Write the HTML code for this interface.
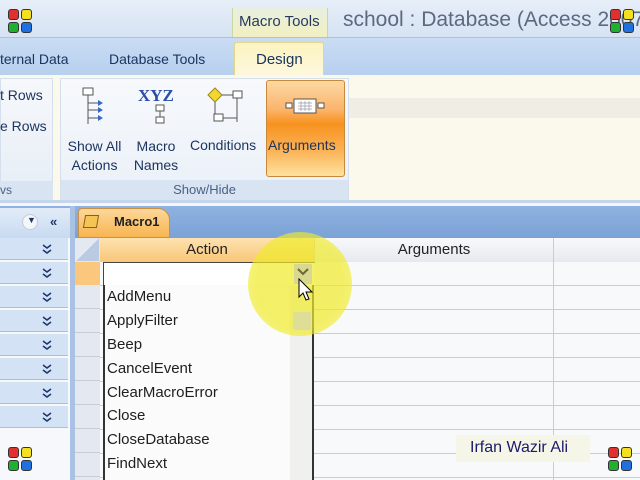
<!DOCTYPE html>
<html><head><style>
*{margin:0;padding:0;box-sizing:border-box}
body{width:640px;height:480px;overflow:hidden;position:relative;font-family:"Liberation Sans",sans-serif;background:#f4f6fa;color:#15284b}
.a{position:absolute}
.logo{position:absolute;width:24px;height:24px}
.logo i{position:absolute;width:11px;height:11px;border-radius:3px;border:1px solid #333}
.rows div{position:absolute;left:0;width:68px;height:22px;background:#d3e2f5;border-bottom:1px solid #a8c0e0}
.rows svg{position:absolute;left:42px;top:6px}
.li{position:absolute;left:107px;font-size:15px;color:#202020}
.hl{position:absolute;left:100px;width:540px;height:1px;background:#c8ccd4}
</style></head><body>
<div class="a" style="left:0;top:0;width:640px;height:38px;background:linear-gradient(#e6eef8,#d6e3f3)"></div>
<div class="a" style="left:232px;top:8px;width:96px;height:30px;background:linear-gradient(#e8efe0,#f1f0c0);border-left:1px solid #c9d6a8;border-right:1px solid #c9d6a8"></div>
<div class="a" style="left:239px;top:13px;font-size:15px;color:#253a5e">Macro Tools</div>
<div class="a" style="left:343px;top:8px;font-size:21px;color:#5b6a80;white-space:nowrap">school : Database (Access 2007)</div>
<div class="a" style="left:0;top:37px;width:640px;height:38px;background:linear-gradient(#c9dcf3,#b7d0ef);border-top:1px solid #a9c3e4"></div>
<div class="a" style="left:0;top:51px;font-size:14px;color:#1c3560;white-space:nowrap">ternal Data</div>
<div class="a" style="left:109px;top:51px;font-size:14px;color:#1c3560">Database Tools</div>
<div class="a" style="left:234px;top:42px;width:90px;height:34px;background:linear-gradient(#fbf3c0,#fdf8de);border:1px solid #e2d68c;border-bottom:none;border-radius:3px 3px 0 0"></div>
<div class="a" style="left:256px;top:51px;font-size:15px;color:#1c3560">Design</div>
<div class="a" style="left:0;top:75px;width:640px;height:128px;background:#fbf9ec;border-bottom:3px solid #c6d6ea"></div>
<div class="a" style="left:348px;top:98px;width:292px;height:20px;background:#f0eee4"></div>
<div class="a" style="left:0;top:78px;width:53px;height:122px;background:linear-gradient(#f6f8fb,#e6edf6);border:1px solid #d6e0ec"></div>
<div class="a" style="left:0;top:87px;font-size:14px;color:#1c3560">t Rows</div>
<div class="a" style="left:0;top:118px;font-size:14px;color:#1c3560">e Rows</div>
<div class="a" style="left:0;top:181px;width:53px;height:19px;background:#d9e4f2"></div>
<div class="a" style="left:0;top:183px;font-size:12px;color:#4a6088">vs</div>
<div class="a" style="left:60px;top:78px;width:289px;height:122px;background:linear-gradient(#f7f9fc,#eaf0f8);border:1px solid #d6e0ec"></div>
<div class="a" style="left:61px;top:180px;width:287px;height:20px;background:#d9e4f2"></div>
<div class="a" style="left:60px;top:182px;width:289px;text-align:center;font-size:13px;color:#4a6088">Show/Hide</div>
<svg class="a" style="left:80px;top:86px" width="30" height="42"><rect x="3" y="2" width="10" height="7" fill="#fff" stroke="#555"/><path d="M8 9V38M8 17h12M8 24h12M8 32h12" stroke="#555" fill="none"/><path d="M18 14l5 3-5 3zM18 21l5 3-5 3zM18 29l5 3-5 3z" fill="#3568c8"/></svg>
<div class="a" style="left:138px;top:86px;font:bold 17px 'Liberation Serif',serif;color:#2a4eaa">XYZ</div>
<svg class="a" style="left:155px;top:104px" width="14" height="22"><rect x="1" y="1" width="8" height="6" fill="#fff" stroke="#555"/><rect x="1" y="13" width="8" height="6" fill="#fff" stroke="#555"/><path d="M5 7v6" stroke="#555"/></svg>
<svg class="a" style="left:206px;top:86px" width="40" height="40"><path d="M2 9l7-7 7 7-7 7z" fill="#f2d730" stroke="#a08a10"/><rect x="27" y="5" width="9" height="7" fill="#fff" stroke="#555"/><rect x="8" y="28" width="9" height="7" fill="#fff" stroke="#555"/><path d="M16 9h11M9 16v12M31 12v24M17 32h14" stroke="#555" fill="none"/></svg>
<div class="a" style="left:66px;top:137px;font-size:14px;line-height:19px;text-align:center;width:57px;color:#1c3560">Show All<br>Actions</div>
<div class="a" style="left:130px;top:137px;font-size:14px;line-height:19px;text-align:center;width:52px;color:#1c3560">Macro<br>Names</div>
<div class="a" style="left:190px;top:137px;font-size:14px;color:#1c3560">Conditions</div>
<div class="a" style="left:266px;top:80px;width:79px;height:97px;border:1px solid #c88a3a;border-radius:3px;background:linear-gradient(#fdd9a4 0%,#fbb46c 30%,#f7921e 45%,#fbb55a 75%,#fde3a0 100%)"></div>
<svg class="a" style="left:285px;top:97px" width="40" height="20"><rect x="1" y="6" width="6" height="5" fill="#fff" stroke="#555"/><rect x="33" y="6" width="6" height="5" fill="#fff" stroke="#555"/><rect x="9" y="2" width="22" height="14" fill="#fff" stroke="#555"/><path d="M13 6h14M13 9h14M13 12h14M16 4v10M20 4v10M24 4v10" stroke="#99a" stroke-width=".7"/></svg>
<div class="a" style="left:268px;top:137px;font-size:14px;color:#1c3560">Arguments</div>
<div class="a" style="left:0;top:206px;width:640px;height:34px;background:linear-gradient(#8fb2e0,#7aa1d6)"></div>
<div class="a" style="left:0;top:208px;width:70px;height:30px;background:linear-gradient(#e2ecf8,#c8daf0)"></div>
<div class="a" style="left:22px;top:214px;width:16px;height:16px;border-radius:50%;background:#f4f6fa;border:1px solid #c0ccdc"></div>
<div class="a" style="left:27px;top:215px;font-size:9px;color:#1b3a6b">▼</div>
<div class="a" style="left:50px;top:214px;font-size:13px;color:#1b3a6b;font-weight:bold">«</div>
<div class="a" style="left:70px;top:206px;width:5px;height:274px;background:#a9c2e4"></div>
<div class="a" style="left:0;top:238px;width:70px;height:242px;background:#f6f8fc"></div>
<div class="rows">
<div style="top:238px"><svg width="10" height="10"><path d="M1 1l4 3 4-3M1 6l4 3 4-3" stroke="#1b3a6b" stroke-width="1.6" fill="none"/></svg></div>
<div style="top:262px"><svg width="10" height="10"><path d="M1 1l4 3 4-3M1 6l4 3 4-3" stroke="#1b3a6b" stroke-width="1.6" fill="none"/></svg></div>
<div style="top:286px"><svg width="10" height="10"><path d="M1 1l4 3 4-3M1 6l4 3 4-3" stroke="#1b3a6b" stroke-width="1.6" fill="none"/></svg></div>
<div style="top:310px"><svg width="10" height="10"><path d="M1 1l4 3 4-3M1 6l4 3 4-3" stroke="#1b3a6b" stroke-width="1.6" fill="none"/></svg></div>
<div style="top:334px"><svg width="10" height="10"><path d="M1 1l4 3 4-3M1 6l4 3 4-3" stroke="#1b3a6b" stroke-width="1.6" fill="none"/></svg></div>
<div style="top:358px"><svg width="10" height="10"><path d="M1 1l4 3 4-3M1 6l4 3 4-3" stroke="#1b3a6b" stroke-width="1.6" fill="none"/></svg></div>
<div style="top:382px"><svg width="10" height="10"><path d="M1 1l4 3 4-3M1 6l4 3 4-3" stroke="#1b3a6b" stroke-width="1.6" fill="none"/></svg></div>
<div style="top:406px"><svg width="10" height="10"><path d="M1 1l4 3 4-3M1 6l4 3 4-3" stroke="#1b3a6b" stroke-width="1.6" fill="none"/></svg></div>
</div>
<div class="a" style="left:78px;top:208px;width:92px;height:30px;background:linear-gradient(#fcd79a,#f8b550);border-radius:4px 12px 0 0;border:1px solid #c89040"></div>
<div class="a" style="left:84px;top:215px;width:14px;height:13px;background:#f4c454;border:1px solid #8a6020;transform:skewX(-10deg)"></div>
<div class="a" style="left:114px;top:214px;font-size:13px;font-weight:bold;color:#222">Macro1</div>
<div class="a" style="left:75px;top:238px;width:565px;height:242px;background:#f8f9fb"></div>
<div class="a" style="left:75px;top:238px;width:25px;height:242px;background:#e4e9f1"></div>
<div class="a" style="left:76px;top:239px;width:23px;height:22px;background:linear-gradient(135deg,#e4e9f1 50%,#b9cbe3 50%)"></div>
<div class="a" style="left:100px;top:238px;width:214px;height:24px;background:linear-gradient(#fde2b0,#f9c778)"></div>
<div class="a" style="left:314px;top:238px;width:326px;height:24px;background:linear-gradient(#f8f9fb,#e6e9ee);border-left:1px solid #c8ccd4"></div>
<div class="a" style="left:553px;top:238px;width:1px;height:242px;background:#c8ccd4"></div>
<div class="a" style="left:100px;top:241px;width:214px;text-align:center;font-size:15px;color:#222">Action</div>
<div class="a" style="left:314px;top:241px;width:240px;text-align:center;font-size:15px;color:#222">Arguments</div>
<div class="a" style="left:75px;top:262px;width:25px;height:23px;background:#fbc77c"></div>
<div class="a" style="left:103px;top:262px;width:212px;height:24px;background:#fff;border:1px solid #444;border-right:none"></div>
<div class="hl" style="top:285px"></div><div class="hl" style="top:309px"></div><div class="hl" style="top:333px"></div><div class="hl" style="top:357px"></div><div class="hl" style="top:381px"></div><div class="hl" style="top:405px"></div><div class="hl" style="top:429px"></div><div class="hl" style="top:453px"></div><div class="hl" style="top:477px"></div>
<div class="a" style="left:75px;top:285px;width:25px;height:195px;background:repeating-linear-gradient(#e4e9f1 0 23px,#c8ccd4 23px 24px)"></div>
<div class="a" style="left:103px;top:285px;width:211px;height:195px;background:#fbfbfb;border-left:2px solid #333;border-right:2px solid #333"></div>
<div class="a" style="left:290px;top:286px;width:22px;height:194px;background:#f0f0ee"></div>
<div class="li" style="top:288px">AddMenu</div>
<div class="li" style="top:312px">ApplyFilter</div>
<div class="li" style="top:336px">Beep</div>
<div class="li" style="top:360px">CancelEvent</div>
<div class="li" style="top:384px">ClearMacroError</div>
<div class="li" style="top:407px">Close</div>
<div class="li" style="top:431px">CloseDatabase</div>
<div class="li" style="top:455px">FindNext</div>
<div class="a" style="left:248px;top:232px;width:104px;height:104px;border-radius:50%;background:radial-gradient(rgba(240,235,40,.7) 60%,rgba(240,235,40,.4) 100%)"></div>
<div class="a" style="left:294px;top:264px;width:18px;height:20px;background:#d8d890"></div>
<svg class="a" style="left:297px;top:268px" width="12" height="8"><path d="M1 1l5 5 5-5" stroke="#6a6a30" stroke-width="2" fill="none"/></svg>
<div class="a" style="left:293px;top:312px;width:18px;height:18px;background:#dede98;border-radius:2px"></div>
<svg class="a" style="left:298px;top:278px" width="16" height="24"><path d="M1 1v18l4-4 3 7 3-1-3-7h6z" fill="#fff" stroke="#000"/></svg>
<div class="a" style="left:456px;top:435px;width:134px;height:27px;background:#f6f6e8"></div>
<div class="a" style="left:470px;top:439px;font-size:16px;color:#1b1b6b">Irfan Wazir Ali</div>
<div class="logo" style="left:8px;top:9px"><i style="left:0;top:0;background:#e03030"></i><i style="left:13px;top:0;background:#f5e020"></i><i style="left:0;top:13px;background:#20b030"></i><i style="left:13px;top:13px;background:#2070e0"></i></div>
<div class="logo" style="left:8px;top:447px"><i style="left:0;top:0;background:#e03030"></i><i style="left:13px;top:0;background:#f5e020"></i><i style="left:0;top:13px;background:#20b030"></i><i style="left:13px;top:13px;background:#2070e0"></i></div>
<div class="logo" style="left:610px;top:9px"><i style="left:0;top:0;background:#e03030"></i><i style="left:13px;top:0;background:#f5e020"></i><i style="left:0;top:13px;background:#20b030"></i><i style="left:13px;top:13px;background:#2070e0"></i></div>
<div class="logo" style="left:608px;top:447px"><i style="left:0;top:0;background:#e03030"></i><i style="left:13px;top:0;background:#f5e020"></i><i style="left:0;top:13px;background:#20b030"></i><i style="left:13px;top:13px;background:#2070e0"></i></div>
</body></html>
